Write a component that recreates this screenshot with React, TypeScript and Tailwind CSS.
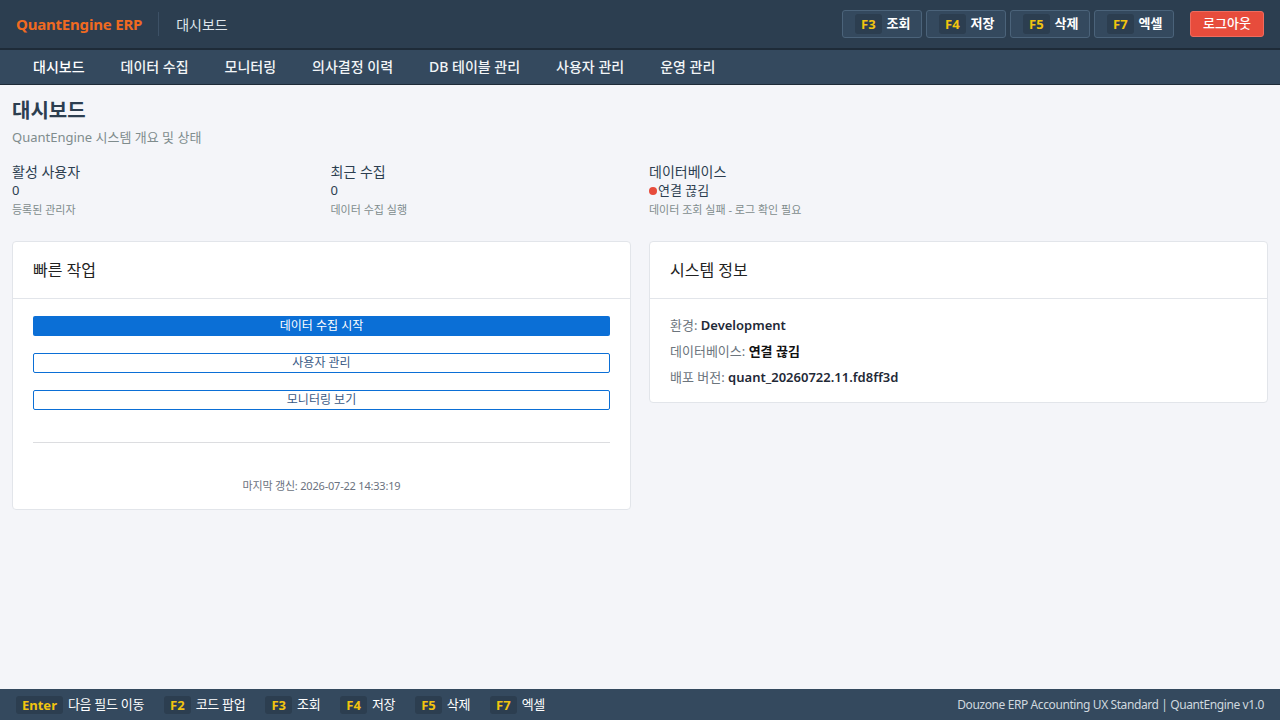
import { useState } from 'react'

const font = { fontFamily: '"Noto Sans", "Noto Sans CJK KR", sans-serif' }

const navItems = ['대시보드', '데이터 수집', '모니터링', '의사결정 이력', 'DB 테이블 관리', '사용자 관리', '운영 관리']

const headerKeys = [
  { key: 'F3', label: '조회' },
  { key: 'F4', label: '저장' },
  { key: 'F5', label: '삭제' },
  { key: 'F7', label: '엑셀' },
]

const footerKeys = [
  { key: 'Enter', label: '다음 필드 이동' },
  { key: 'F2', label: '코드 팝업' },
  { key: 'F3', label: '조회' },
  { key: 'F4', label: '저장' },
  { key: 'F5', label: '삭제' },
  { key: 'F7', label: '엑셀' },
]

function Stat({ label, value, sub, dot }: { label: string; value: string; sub: string; dot?: boolean }) {
  return (
    <div className="flex flex-col">
      <div className="text-[14px] leading-[18px] text-[#2c3e50]">{label}</div>
      <div className="flex items-center text-[13px] leading-[19px] text-[#2c3e50]">
        {dot && <span className="w-2 h-2 rounded-full bg-[#e74c3c] mr-px" />}
        {value}
      </div>
      <div className="text-[11px] leading-[20px] text-[#7f8c8d]">{sub}</div>
    </div>
  )
}

export default function App() {
  const [active] = useState(0)
  return (
    <div className="h-screen flex flex-col bg-[#f4f5f9] overflow-hidden" style={font}>
      {/* Header */}
      <header className="h-[48px] bg-[#2c3e50] flex items-center px-4 flex-shrink-0">
        <div className="text-[#f06a21] font-bold text-[15px] tracking-[-0.2px]">QuantEngine ERP</div>
        <div className="w-px h-6 bg-[#3d5166] ml-[16px] mr-[17px]" />
        <div className="text-[#dfe6ec] text-[14px]">대시보드</div>
        <div className="flex-1" />
        <div className="flex items-center gap-[4px]">
          {headerKeys.map(k => (
            <button
              key={k.key}
              className="h-[28px] w-[80px] flex items-center gap-[5px] pl-[12px] rounded-[3px] border border-[#4b637a] bg-[#34495e]"
            >
              <span className="bg-[#2c3e50] text-[#f1c40f] font-bold text-[13px] leading-[20px] px-[6px] rounded-[3px]">{k.key}</span>
              <span className="text-white font-bold text-[13px]">{k.label}</span>
            </button>
          ))}
        </div>
        <button className="ml-[16px] h-[26px] w-[74px] rounded-[3px] bg-[#e74c3c] border border-[#ef6b5e] text-white text-[13px] font-medium">
          로그아웃
        </button>
      </header>

      {/* Nav */}
      <nav className="h-[37px] bg-[#34495e] border-t-2 border-b border-[#1e2b38] flex items-center pl-[15px] flex-shrink-0">
        {navItems.map((n, i) => (
          <a
            key={n}
            className={`px-[18px] text-[14px] font-medium leading-[34px] ${i === active ? 'text-white' : 'text-[#f2f5f7]'}`}
          >
            {n}
          </a>
        ))}
      </nav>

      {/* Main */}
      <main className="flex-1 px-3 pt-[12px]">
        <h1 className="text-[20px] font-bold leading-[28px] text-[#2c3e50]">대시보드</h1>
        <p className="text-[13px] text-[#7f8c8d] mt-[3px] leading-[18px]">QuantEngine 시스템 개요 및 상태</p>

        <div className="grid grid-cols-4 gap-[18px] mt-[17px]">
          <Stat label="활성 사용자" value="0" sub="등록된 관리자" />
          <Stat label="최근 수집" value="0" sub="데이터 수집 실행" />
          <Stat label="데이터베이스" value="연결 끊김" sub="데이터 조회 실패 - 로그 확인 필요" dot />
        </div>

        <div className="grid grid-cols-2 gap-[18px] mt-[21px] items-start">
          {/* Quick actions */}
          <section className="bg-white border border-[#e2e5ea] rounded-[4px]">
            <div className="h-[57px] flex items-center px-5 border-b border-[#e2e5ea]">
              <h2 className="text-[16px] text-[#222]">빠른 작업</h2>
            </div>
            <div className="px-5 pt-[17px] pb-[15px]">
              <div className="flex flex-col gap-[17px]">
                <button className="h-[20px] rounded-[2px] bg-[#0b6fd6] text-white text-[12px] leading-[18px]">데이터 수집 시작</button>
                <button className="h-[20px] rounded-[2px] border border-[#0b6fd6] bg-white text-[#3a5a85] text-[12px] leading-[18px]">사용자 관리</button>
                <button className="h-[20px] rounded-[2px] border border-[#0b6fd6] bg-white text-[#3a5a85] text-[12px] leading-[18px]">모니터링 보기</button>
              </div>
              <div className="h-px bg-[#dcdde0] mt-[32px]" />
              <div className="text-center text-[11px] text-[#6b7280] mt-[35px] leading-[16px] tracking-[-0.2px]">마지막 갱신: 2026-07-22 14:33:19</div>
            </div>
          </section>

          {/* System info */}
          <section className="bg-white border border-[#e2e5ea] rounded-[4px]">
            <div className="h-[57px] flex items-center px-5 border-b border-[#e2e5ea]">
              <h2 className="text-[16px] text-[#222]">시스템 정보</h2>
            </div>
            <div className="px-5 pt-[13px] pb-[12px] flex flex-col text-[13px] leading-[26px]">
              <div><span className="text-[#6c757d]">환경:</span> <span className="font-semibold text-[#1f2937]">Development</span></div>
              <div><span className="text-[#6c757d]">데이터베이스:</span> <span className="font-semibold text-[#111]">연결 끊김</span></div>
              <div><span className="text-[#6c757d]">배포 버전:</span> <span className="font-semibold text-[#1f2937]">quant_20260722.11.fd8ff3d</span></div>
            </div>
          </section>
        </div>
      </main>

      {/* Footer */}
      <footer className="h-[31px] bg-[#34495e] flex items-center px-4 flex-shrink-0">
        <div className="flex items-center gap-[20px]">
          {footerKeys.map(k => (
            <div key={k.key} className="flex items-center gap-[5px]">
              <span className="bg-[#2c3e50] text-[#f1c40f] font-bold text-[13px] leading-[16px] px-[6px] py-[1px] rounded-[3px]">{k.key}</span>
              <span className="text-white text-[13px] tracking-[-0.3px]">{k.label}</span>
            </div>
          ))}
        </div>
        <div className="flex-1" />
        <div className="text-[12px] text-[#cfd8df] tracking-[-0.4px]">Douzone ERP Accounting UX Standard | QuantEngine v1.0</div>
      </footer>
    </div>
  )
}
